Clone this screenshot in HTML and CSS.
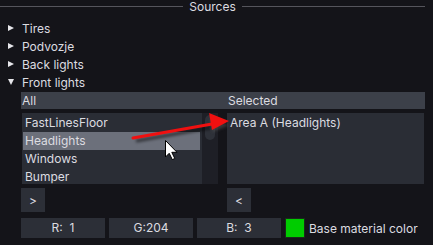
FILE: index.html
```html
<!DOCTYPE html>
<html>
<head>
<meta charset="utf-8">
<link rel="stylesheet" href="styles.css">
</head>
<body>
<div class="app">
  <div class="title"><span class="rule"></span><span class="title-text">Sources</span><span class="rule"></span></div>
  <div class="tree">
    <div class="node"><span class="tri right"></span><span>Tires</span></div>
    <div class="node"><span class="tri right"></span><span>Podvozje</span></div>
    <div class="node"><span class="tri right"></span><span>Back lights</span></div>
    <div class="node"><span class="tri down"></span><span>Front lights</span></div>
  </div>
  <div class="panel">
    <div class="head head-left">All</div>
    <div class="head head-right">Selected</div>
    <div class="col-left">
      <div class="list list-all">
        <div class="item">FastLinesFloor</div>
        <div class="item sel">Headlights</div>
        <div class="item">Windows</div>
        <div class="item">Bumper</div>
      </div>
      <div class="scroll"><div class="thumb"></div></div>
    </div>
    <div class="col-right">
      <div class="list list-sel">
        <div class="item">Area A (Headlights)</div>
      </div>
    </div>
    <div class="btn-cell"><button class="btn">&gt;</button></div>
    <div class="btn-cell right"><button class="btn">&lt;</button></div>
  </div>
  <div class="rgb">
    <div class="field">R:&nbsp; 1</div>
    <div class="field">G:204</div>
    <div class="field">B:&nbsp; 3</div>
    <div class="swatch"></div>
    <div class="rgb-label">Base material color</div>
  </div>
  <svg class="overlay" width="433" height="245" viewBox="0 0 433 245">
    <defs>
      <filter id="sh" x="-20%" y="-50%" width="140%" height="200%">
        <feGaussianBlur stdDeviation="1.6"/>
      </filter>
    </defs>
    <g filter="url(#sh)" opacity="0.55">
      <line x1="136" y1="141" x2="214" y2="127" stroke="#000" stroke-width="3"/>
      <polygon points="229,125 210,118 213,132" fill="#555"/>
    </g>
    <line x1="133" y1="138" x2="212" y2="124" stroke="#f01010" stroke-width="3" stroke-linecap="round"/>
    <polygon points="229,121 209,113 212,130" fill="#f01010"/>
    <path d="M165.5 140.5 V157 L169.2 153.3 L172.3 159.6 L174.8 158.5 L171.8 152.3 L177 152.3 Z" fill="#fff" stroke="#000" stroke-width="1" stroke-linejoin="round"/>
  </svg>
</div>
</body>
</html>
```

FILE: styles.css
```css
* { box-sizing: border-box; }
html, body {
  margin: 0;
  padding: 0;
  background: #141419;
}
body {
  width: 433px;
  height: 245px;
  overflow: hidden;
  font-family: Inter, "Noto Sans", sans-serif;
  font-size: 12px;
  color: #dcdce0;
}
.app {
  position: relative;
  width: 433px;
  height: 245px;
  padding-right: 8px;
}
.title {
  display: flex;
  align-items: center;
  height: 13px;
}
.rule {
  flex: 1;
  height: 1px;
  background: #55555c;
}
.title-text {
  padding: 0 6px;
  line-height: 13px;
}
.tree {
  padding-top: 6px;
}
.node {
  display: flex;
  align-items: center;
  height: 18px;
  padding-left: 8px;
}
.tri {
  width: 14px;
  height: 18px;
  position: relative;
}
.tri.right::before {
  content: "";
  position: absolute;
  left: 0;
  top: 6px;
  border-left: 6px solid #e6e6ea;
  border-top: 3.5px solid transparent;
  border-bottom: 3.5px solid transparent;
}
.tri.down::before {
  content: "";
  position: absolute;
  left: 0;
  top: 6px;
  border-top: 6px solid #e6e6ea;
  border-left: 3.5px solid transparent;
  border-right: 3.5px solid transparent;
}
.panel {
  margin-left: 21px;
  margin-top: 1px;
  width: 404px;
  display: grid;
  grid-template-columns: 205px 199px;
}
.head {
  height: 17px;
  line-height: 17px;
  background: #3c4049;
  margin-bottom: 4px;
}
.head-left { padding-left: 1px; }
.head-right { padding-left: 2px; }
.col-left {
  display: flex;
  padding-left: 1px;
  height: 71px;
}
.list {
  background: #2a2d35;
  height: 71px;
  overflow: hidden;
  padding-top: 1px;
}
.list-all {
  width: 180px;
}
.list-sel {
  margin-left: 1px;
  width: 197px;
}
.item {
  height: 18px;
  line-height: 18px;
  padding-left: 3px;
  white-space: nowrap;
}
.list-all .item {
  margin-right: 2px;
  padding-left: 2px;
  margin-left: 1px;
}
.item.sel {
  background: #6c707b;
}
.scroll {
  width: 16px;
  height: 71px;
  background: #1e1f26;
  padding: 2px 3px 0 3px;
}
.thumb {
  width: 10px;
  height: 25px;
  border-radius: 5px;
  background: #2e3139;
}
.btn-cell {
  padding-top: 4px;
}
.btn-cell.right {
  padding-left: 1px;
}
.btn {
  width: 24px;
  height: 24px;
  border: none;
  margin: 0;
  padding: 0;
  background: #2c2f37;
  color: #dcdce0;
  font-family: Inter, "Noto Sans", sans-serif;
  font-size: 12px;
  display: block;
}
.rgb {
  display: flex;
  align-items: center;
  gap: 4px;
  margin-left: 21px;
  margin-top: 6px;
  height: 20px;
}
.field {
  width: 84px;
  height: 20px;
  line-height: 20px;
  background: #2c2f37;
  text-align: center;
  white-space: pre;
}
.swatch {
  width: 20px;
  height: 20px;
  background: #00cc00;
  border: 1px solid #1a2a1a;
}
.rgb-label {
  white-space: nowrap;
}
.overlay {
  position: absolute;
  left: 0;
  top: 0;
  pointer-events: none;
}
```
